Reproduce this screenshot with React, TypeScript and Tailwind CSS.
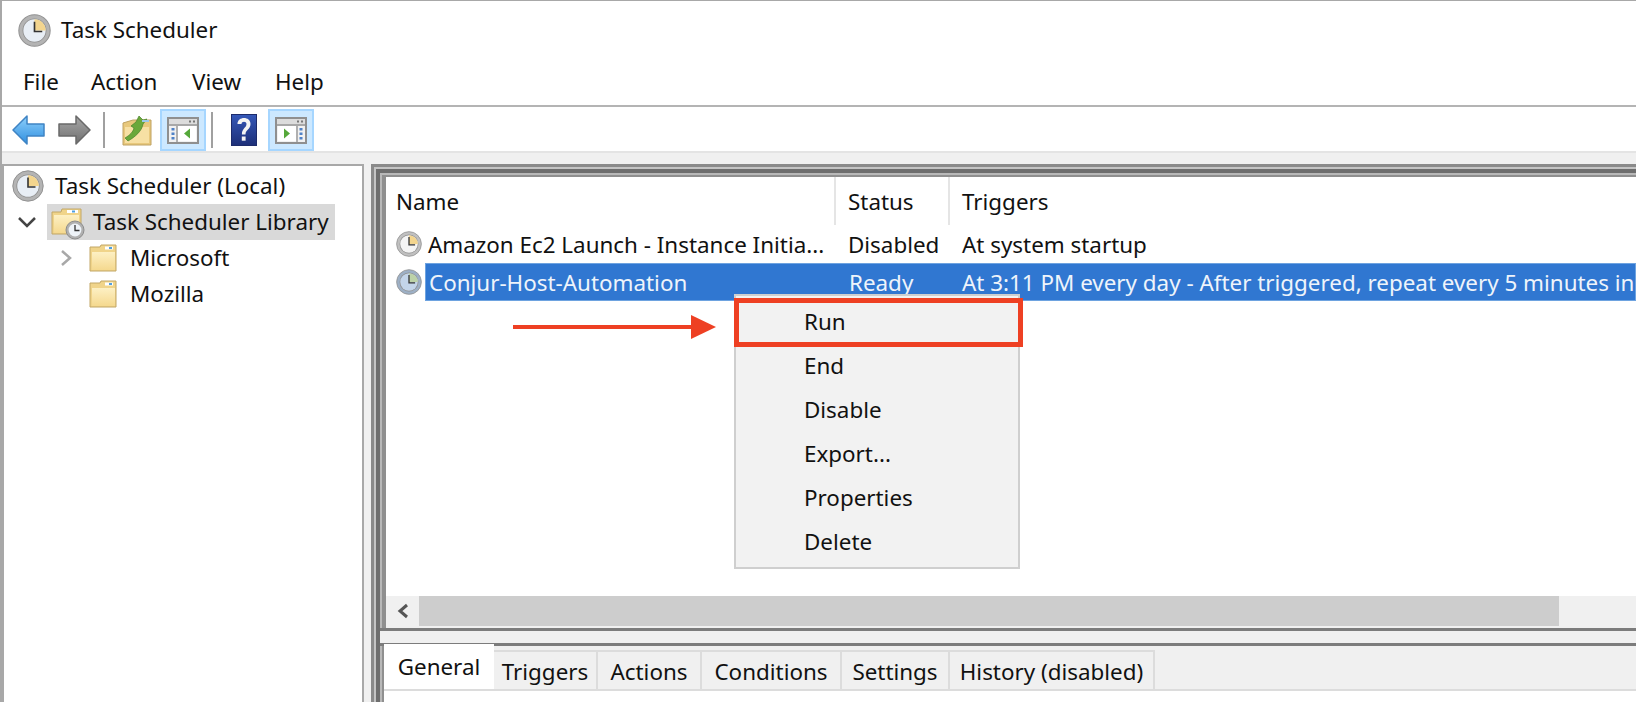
import { useId } from "react";

function ClockIcon({ size = 32, face = "#e8eef5", wedge = "#f3d58e", ring = "#b4b4b4" }: { size?: number; face?: string; wedge?: string; ring?: string }) {
  return (
    <svg width={size} height={size} viewBox="0 0 32 32" className="shrink-0">
      <circle cx="16" cy="16" r="15.2" fill={ring} stroke="#929292" />
      <circle cx="16" cy="16" r="11.6" fill="#8f8f8f" />
      <circle cx="16" cy="16" r="10.8" fill={face} />
      <path d="M16 5.2A10.8 10.8 0 0 1 26.8 16H16z" fill={wedge} />
      <path d="M16 7.5V17h7.5" fill="none" stroke="#333" strokeWidth="1.6" />
    </svg>
  );
}

function FolderIcon({ width = 28, height = 28 }: { width?: number; height?: number }) {
  const id = useId();
  return (
    <svg width={width} height={height} viewBox="0 0 28 28" className="shrink-0">
      <defs>
        <linearGradient id={id} x1="0" y1="0" x2="0" y2="1">
          <stop offset="0" stopColor="#fdf0c4" />
          <stop offset="1" stopColor="#f5d98f" />
        </linearGradient>
      </defs>
      <path d="M1 27V3h10l1 -2h15v26z" fill="#f0d48a" stroke="#c2a766" />
      <path d="M3 8h23v18H3z" fill={`url(#${id})`} />
      <path d="M16 2.5h8v3h-8z" fill="#fff" />
      <path d="M20 3h3v2h-3z" fill="#4f9fe0" />
    </svg>
  );
}

function LibraryIcon() {
  const id = useId();
  return (
    <svg width="34" height="36" viewBox="0 0 34 36" className="shrink-0">
      <defs>
        <linearGradient id={id} x1="0" y1="0" x2="0" y2="1">
          <stop offset="0" stopColor="#fdf0c4" />
          <stop offset="1" stopColor="#f5d98f" />
        </linearGradient>
      </defs>
      <path d="M1 30V8h9l1 -3h19v25z" fill="#f0d48a" stroke="#c2a766" />
      <path d="M3 11h25v18H3z" fill={`url(#${id})`} />
      <path d="M16 6h11v3H16z" fill="#fff" />
      <path d="M21 6.5h3v2h-3z" fill="#4f9fe0" />
      <circle cx="24" cy="26" r="9" fill="#b0b0b0" stroke="#8c8c8c" />
      <circle cx="24" cy="26" r="6.4" fill="#eef3f8" />
      <path d="M24 21v5.5h4.5" fill="none" stroke="#333" strokeWidth="1.3" />
    </svg>
  );
}

function ArrowIcon({ back }: { back?: boolean }) {
  const id = useId();
  return (
    <svg width="33" height="30" viewBox="0 0 33 30" className="shrink-0">
      <defs>
        <linearGradient id={id} x1="0" y1="0" x2="0" y2="1">
          <stop offset="0" stopColor={back ? "#8fd0fb" : "#a8a8a8"} />
          <stop offset="1" stopColor={back ? "#2f8fe0" : "#6f6f6f"} />
        </linearGradient>
      </defs>
      <path
        d={back ? "M1 15 15 1v8h17v12H15v8z" : "M32 15 18 1v8H1v12h17v8z"}
        fill={`url(#${id})`}
        stroke={back ? "#3f84c4" : "#6a6a6a"}
        strokeWidth="1.5"
        strokeLinejoin="round"
      />
    </svg>
  );
}

function UpFolderIcon() {
  return (
    <svg width="30" height="32" viewBox="0 0 30 32" className="shrink-0">
      <path d="M1 31V9l10 -3h18v25z" fill="#e8c87c" stroke="#bfa262" />
      <path d="M3 13h24v16H3z" fill="#f7e0a4" />
      <path d="M3 24c5 -3 8 -6 9 -10l-3 -2 5 -4 3 -6 4 4 4 -1 -4 5c-1 7 -8 13 -15 17z" fill="#6aa83a" stroke="#47822a" strokeWidth=".7" />
      <path d="M20 6h7v2h-7z" fill="#9cc8ea" />
    </svg>
  );
}

function PaneIcon({ right }: { right?: boolean }) {
  return (
    <svg width="32" height="27" viewBox="0 0 32 27" className="shrink-0">
      <rect x="1" y="1" width="30" height="25" fill="#f1f1f1" stroke="#8f8f8f" strokeWidth="2" />
      <rect x="2" y="2" width="28" height="5" fill="#dcdcdc" />
      <path d="M22 3.5h2v2h-2zM26 3.5h2v2h-2z" fill="#777" />
      <path d="M2 8h28" stroke="#8f8f8f" strokeWidth="1.5" />
      {right ? (
        <>
          <rect x="3" y="9" width="18" height="15" fill="#fff" />
          <path d="M22 9v16" stroke="#9a9a9a" strokeWidth="1.5" />
          <path d="M9 11.5 15 16.5 9 21.5z" fill="#55a83a" />
          <path d="M24.5 11h3v2.5h-3zM24.5 15.5h3V18h-3zM24.5 20h3v2.5h-3z" fill="#4f82c8" />
        </>
      ) : (
        <>
          <rect x="11" y="9" width="18" height="15" fill="#fff" />
          <path d="M10 9v16" stroke="#9a9a9a" strokeWidth="1.5" />
          <path d="M23 11.5 17 16.5 23 21.5z" fill="#55a83a" />
          <path d="M4.5 11h3v2.5h-3zM4.5 15.5h3V18h-3zM4.5 20h3v2.5h-3z" fill="#4f82c8" />
        </>
      )}
    </svg>
  );
}

function HelpIcon() {
  const id = useId();
  return (
    <svg width="26" height="32" viewBox="0 0 26 32" className="shrink-0">
      <defs>
        <linearGradient id={id} x1="0" y1="0" x2="0" y2="1">
          <stop offset="0" stopColor="#3558b8" />
          <stop offset="1" stopColor="#1d2f78" />
        </linearGradient>
      </defs>
      <rect x="0.5" y="0.5" width="25" height="31" fill={`url(#${id})`} stroke="#1d2b6b" />
      <path d="M6.5 10c0 -8 13 -8 13 0 0 5.5 -5 5.5 -5 10.5h-3.6c0 -6.5 4.6 -6.5 4.6 -10.5 0 -3 -5 -3 -5 0z" fill="#f4f4f4" />
      <rect x="10.8" y="22.5" width="3.8" height="4.2" fill="#f4f4f4" />
    </svg>
  );
}

function ToolButton({ children }: { children: React.ReactNode }) {
  return (
    <div className="flex h-[42px] w-[46px] items-center justify-center border-2 border-[#a6d6ff] bg-[#cce8ff]">
      {children}
    </div>
  );
}

const menuItems = ["Run", "End", "Disable", "Export...", "Properties", "Delete"];
const tabs = [
  { label: "Triggers", width: "w-[104px]" },
  { label: "Actions", width: "w-[104px]" },
  { label: "Conditions", width: "w-[140px]" },
  { label: "Settings", width: "w-[108px]" },
  { label: "History (disabled)", width: "w-[205px]" },
];

export default function App() {
  return (
    <div className="relative flex h-[702px] w-[1636px] flex-col overflow-hidden border-l-2 border-t border-[#a8a8a8] bg-white font-['Noto_Sans',sans-serif] text-[22.4px] text-[#111]">
      {/* Title bar */}
      <div className="flex h-[58px] items-center pl-[16px]">
        <ClockIcon size={33} />
        <span className="ml-[10px]">Task Scheduler</span>
      </div>

      {/* Menu */}
      <div className="flex h-[48px] items-center border-b-2 border-[#b4b4b4] pl-[21px]">
        <span className="w-[68px]">File</span>
        <span className="w-[101px]">Action</span>
        <span className="w-[83px]">View</span>
        <span>Help</span>
      </div>

      {/* Toolbar */}
      <div className="flex h-[44px] items-center pl-[10px] pt-[2px]">
        <ArrowIcon back />
        <div className="ml-[13px]">
          <ArrowIcon />
        </div>
        <div className="ml-[12px] h-[36px] w-[2px] bg-[#a0a0a0]" />
        <div className="ml-[17px]">
          <UpFolderIcon />
        </div>
        <div className="ml-[8px]">
          <ToolButton>
            <PaneIcon />
          </ToolButton>
        </div>
        <div className="ml-[5px] h-[36px] w-[2px] bg-[#a0a0a0]" />
        <div className="ml-[18px]">
          <HelpIcon />
        </div>
        <div className="ml-[11px]">
          <ToolButton>
            <PaneIcon right />
          </ToolButton>
        </div>
      </div>

      {/* Strip under toolbar */}
      <div className="h-[13px] border-t-2 border-[#e4e4e4] bg-[#f0f0f0]" />

      <div className="flex min-h-0 flex-1 bg-[#f0f0f0]">
        {/* Tree */}
        <div className="h-full w-[362px] border-2 border-b-0 border-[#a8a8a8] bg-white pt-[2px]">
          <div className="flex h-[36px] items-center pl-[8px]">
            <ClockIcon size={32} />
            <span className="ml-[11px]">Task Scheduler (Local)</span>
          </div>
          <div className="flex h-[36px] items-center">
            <svg width="20" height="12" viewBox="0 0 20 12" className="ml-[13px]">
              <path d="M2 2 10 10 18 2" fill="none" stroke="#444" strokeWidth="2.5" />
            </svg>
            <div className="ml-[10px] flex h-[36px] w-[288px] items-center bg-[#d9d9d9] pl-[4px]">
              <LibraryIcon />
              <span className="ml-[8px]">Task Scheduler Library</span>
            </div>
          </div>
          <div className="flex h-[36px] items-center pl-[56px]">
            <svg width="12" height="18" viewBox="0 0 12 18">
              <path d="M2 2 10 9 2 16" fill="none" stroke="#a8a8a8" strokeWidth="2.5" />
            </svg>
            <div className="ml-[17px]">
              <FolderIcon />
            </div>
            <span className="ml-[13px]">Microsoft</span>
          </div>
          <div className="flex h-[36px] items-center pl-[85px]">
            <FolderIcon />
            <span className="ml-[13px]">Mozilla</span>
          </div>
        </div>

        {/* Right side frame, striped along the top and left */}
        <div className="ml-[7px] flex min-w-0 flex-1 flex-col pl-[15px] pt-[13px] shadow-[inset_3px_3px_0_#8a8a8a,inset_5px_5px_0_#c4c4c4,inset_9px_9px_0_#6e6e6e,inset_11px_11px_0_#b8b8b8,inset_15px_13px_0_#8f8f8f]">
          {/* Task list */}
          <div className="flex h-[419px] flex-col bg-white">
            <div className="flex h-[48px] items-center">
              <div className="flex h-full w-[450px] items-center border-r-2 border-[#e5e5e5] pl-[10px] pt-[1px]">Name</div>
              <div className="flex h-full w-[114px] items-center border-r-2 border-[#e5e5e5] pl-[12px] pt-[1px]">Status</div>
              <div className="pl-[12px] pt-[1px]">Triggers</div>
            </div>
            <div className="flex h-[38px] items-center">
              <div className="flex w-[450px] items-center pl-[10px]">
                <ClockIcon size={26} face="#f4f4f4" ring="#c0c0c0" />
                <span className="ml-[6px] whitespace-nowrap pt-[2px]">Amazon Ec2 Launch - Instance Initia...</span>
              </div>
              <div className="w-[114px] pl-[12px] pt-[2px]">Disabled</div>
              <div className="whitespace-nowrap pl-[12px] pt-[2px]">At system startup</div>
            </div>
            <div className="flex h-[38px] items-center whitespace-nowrap">
              <div className="flex h-full w-[39px] items-center pl-[10px]">
                <ClockIcon size={26} face="#c3d5ea" ring="#9db0c6" wedge="#bcd2a8" />
              </div>
              <div className="flex h-full min-w-0 flex-1 items-center border border-[#6ea3e0] bg-[#3077d1] pt-[1px] text-[#eef4fb]">
                <div className="w-[410px] pl-[3px]">Conjur-Host-Automation</div>
                <div className="w-[114px] pl-[13px]">Ready</div>
                <div className="pl-[12px]">At 3:11 PM every day - After triggered, repeat every 5 minutes in</div>
              </div>
            </div>
          </div>

          {/* Horizontal scrollbar */}
          <div className="flex h-[30px] items-center bg-[#f0f0f0]">
            <div className="flex w-[33px] justify-center">
              <svg width="12" height="16" viewBox="0 0 12 16">
                <path d="M10 2 3 8 10 14" fill="none" stroke="#555" strokeWidth="3" />
              </svg>
            </div>
            <div className="h-full w-[1140px] bg-[#cdcdcd]" />
          </div>

          {/* Splitter */}
          <div className="-ml-[6px] mt-[2px] h-[18px] border-y-[3px] border-[#7c7c7c] bg-[#f0f0f0]" />

          {/* Tabs */}
          <div className="-ml-[2px] flex h-[45px] items-end border-b-2 border-[#dcdcdc] bg-[#f0f0f0]">
            <div className="flex h-[45px] w-[110px] items-center justify-center bg-white pt-[1px]">General</div>
            {tabs.map((tab) => (
              <div
                key={tab.label}
                className={`flex h-[39px] items-center justify-center whitespace-nowrap border-r-2 border-t-2 border-[#dcdcdc] pt-[2px] ${tab.width}`}
              >
                {tab.label}
              </div>
            ))}
          </div>
          <div className="-ml-[2px] flex-1 bg-white" />
        </div>
      </div>

      {/* Context menu */}
      <div className="absolute left-[732px] top-[293px] h-[275px] w-[286px] border-2 border-[#cfcfcf] bg-[#f2f2f2] pt-[4px]">
        {menuItems.map((item) => (
          <div key={item} className="flex h-[44px] items-center pl-[68px]">
            {item}
          </div>
        ))}
      </div>

      {/* Callout */}
      <div className="absolute left-[732px] top-[297px] h-[49px] w-[289px] border-[5px] border-[#ee4023]" />
      <div className="absolute left-[511px] top-[314px] flex items-center">
        <div className="h-[4px] w-[178px] bg-[#ee4023]" />
        <div className="h-0 w-0 border-y-[12px] border-l-[25px] border-y-transparent border-l-[#ee4023]" />
      </div>
    </div>
  );
}
